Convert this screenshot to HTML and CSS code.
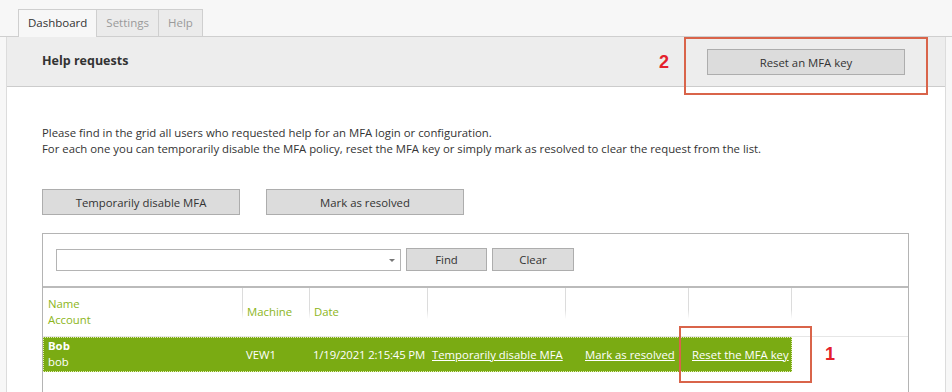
FILE: index.html
```html
<!DOCTYPE html>
<html>
<head>
<meta charset="utf-8">
<link rel="stylesheet" href="styles.css">
</head>
<body>
<div class="tabs">
  <div class="tab active">Dashboard</div>
  <div class="tab">Settings</div>
  <div class="tab">Help</div>
</div>
<div class="panel">
  <div class="head">
    <div class="title">Help requests</div>
    <button class="btn btn-reset">Reset an MFA key</button>
  </div>
  <div class="content">
    <p class="intro">Please find in the grid all users who requested help for an MFA login or configuration.<br>For each one you can temporarily disable the MFA policy, reset the MFA key or simply mark as resolved to clear the request from the list.</p>
    <div class="actions">
      <button class="btn btn-wide">Temporarily disable MFA</button>
      <button class="btn btn-wide">Mark as resolved</button>
    </div>
    <div class="grid">
      <div class="search">
        <div class="combo"><span class="caret"></span></div>
        <button class="btn btn-find">Find</button>
        <button class="btn btn-clear">Clear</button>
      </div>
      <div class="cols header">
        <div class="hc first">Name<br>Account</div>
        <div class="hc sep">Machine</div>
        <div class="hc sep">Date</div>
        <div class="hc sep"></div>
        <div class="hc sep"></div>
        <div class="hc sep"></div>
        <div class="hc sep"></div>
      </div>
      <div class="rows">
        <div class="cols row">
          <div class="c name"><b>Bob</b><br>bob</div>
          <div class="c">VEW1</div>
          <div class="c date">1/19/2021 2:15:45 PM</div>
          <div class="c"><a>Temporarily disable MFA</a></div>
          <div class="c"><a>Mark as resolved</a></div>
          <div class="c"><a>Reset the MFA key</a></div>
        </div>
      </div>
    </div>
  </div>
</div>
<div class="mark mark2"></div>
<div class="num num2">2</div>
<div class="mark mark1"></div>
<div class="num num1">1</div>
</body>
</html>
```
FILE: styles.css
```css
html, body {
  margin: 0;
  padding: 0;
  background: #f7f7f7;
  font-family: "Open Sans", "Noto Sans", sans-serif;
  font-size: 11.35px;
  color: #333;
  height: 392px;
  overflow: hidden;
}
.tabs {
  display: flex;
  padding: 9px 0 0 18px;
  height: 27px;
  border-bottom: 1px solid #cfcfcf;
}
.tab {
  border: 1px solid #cfcfcf;
  border-bottom: none;
  margin-right: -1px;
  height: 27px;
  box-sizing: border-box;
  padding: 0 9px;
  line-height: 26px;
  background: #ebebeb;
  color: #9a9a9a;
  font-size: 11.5px;
}
.tab.active {
  background: #f7f7f7;
  color: #333;
  height: 28px;
  margin-bottom: -1px;
  position: relative;
}
.panel {
  margin-left: 6px;
  width: 938px;
  border-left: 1px solid #dcdcdc;
  border-right: 1px solid #dcdcdc;
  background: #fff;
  height: 355px;
  overflow: hidden;
}
.head {
  height: 49px;
  background: #ededed;
  border-bottom: 1px solid #cccccc;
  display: flex;
  align-items: center;
  padding-left: 35px;
}
.title {
  font-weight: bold;
  font-size: 12.5px;
  color: #333;
  flex: 1;
  margin-top: -2px;
}
.btn {
  font-family: inherit;
  font-size: 11.35px;
  color: #333;
  background: #dcdcdc;
  border: 1px solid #adadad;
  box-sizing: border-box;
  padding: 0;
  margin: 0;
}
.btn-reset {
  width: 198px;
  height: 26px;
  margin-right: 40px;
  margin-top: 1px;
}
.content {
  padding: 38px 0 0 35px;
}
.intro {
  margin: 0;
  line-height: 16px;
  color: #333;
}
.actions {
  display: flex;
  gap: 26px;
  margin-top: 32px;
}
.btn-wide {
  width: 198px;
  height: 26px;
}
.grid {
  margin-top: 18px;
  width: 867px;
  box-sizing: border-box;
  border: 1px solid #b4b4b4;
  border-bottom: none;
  height: 170px;
}
.search {
  display: flex;
  align-items: flex-start;
  padding: 14px 0 0 13px;
  height: 38px;
  box-sizing: content-box;
  border-bottom: 2px solid #bbbbbb;
}
.combo {
  width: 345px;
  height: 22px;
  margin-top: 1px;
  box-sizing: border-box;
  border: 1px solid #b4b4b4;
  background: #fff;
  display: flex;
  justify-content: flex-end;
  align-items: center;
  padding-right: 5px;
  margin-right: 5px;
}
.caret {
  width: 0;
  height: 0;
  border-left: 3px solid transparent;
  border-right: 3px solid transparent;
  border-top: 3px solid #777;
}
.btn-find {
  width: 81px;
  height: 23px;
  margin-right: 5px;
}
.btn-clear {
  width: 82px;
  height: 23px;
}
.cols {
  display: grid;
  grid-template-columns: 199px 67px 118px 138px 123px 103px 1fr;
}
.header {
  height: 48px;
  border-bottom: 1px solid #e6e6e6;
  color: #8cb51a;
}
.hc {
  padding-left: 5px;
  display: flex;
  align-items: center;
  padding-top: 0;
  line-height: 16px;
}
.sep {
  background: linear-gradient(#dcdcdc, #dcdcdc 70%, rgba(220,220,220,0)) left top / 1px 31px no-repeat;
}
.row {
  width: 749px;
  height: 35px;
  box-sizing: border-box;
  background: #7aab13;
  border: 1px dotted #e3efb0;
  color: #fff;
  grid-template-columns: 198px 67px 119px 153px 107px 1fr;
}
.c {
  display: flex;
  align-items: center;
  padding-left: 4px;
  white-space: nowrap;
  line-height: 16px;
}
.c.date {
  letter-spacing: -0.15px;
}
.c.name {
  display: block;
  padding-top: 0;
}
.c a {
  color: #fff;
  text-decoration: underline;
}
.mark {
  position: absolute;
  border: 2px solid #d9644a;
  box-sizing: border-box;
}
.mark2 {
  left: 684px;
  top: 37px;
  width: 244px;
  height: 58px;
}
.mark1 {
  left: 679px;
  top: 326px;
  width: 133px;
  height: 57px;
}
.num {
  position: absolute;
  color: #e4202b;
  font-family: "Liberation Sans", sans-serif;
  font-weight: bold;
  font-size: 18px;
}
.num2 {
  left: 659px;
  top: 52px;
}
.num1 {
  left: 825px;
  top: 344px;
}
```
